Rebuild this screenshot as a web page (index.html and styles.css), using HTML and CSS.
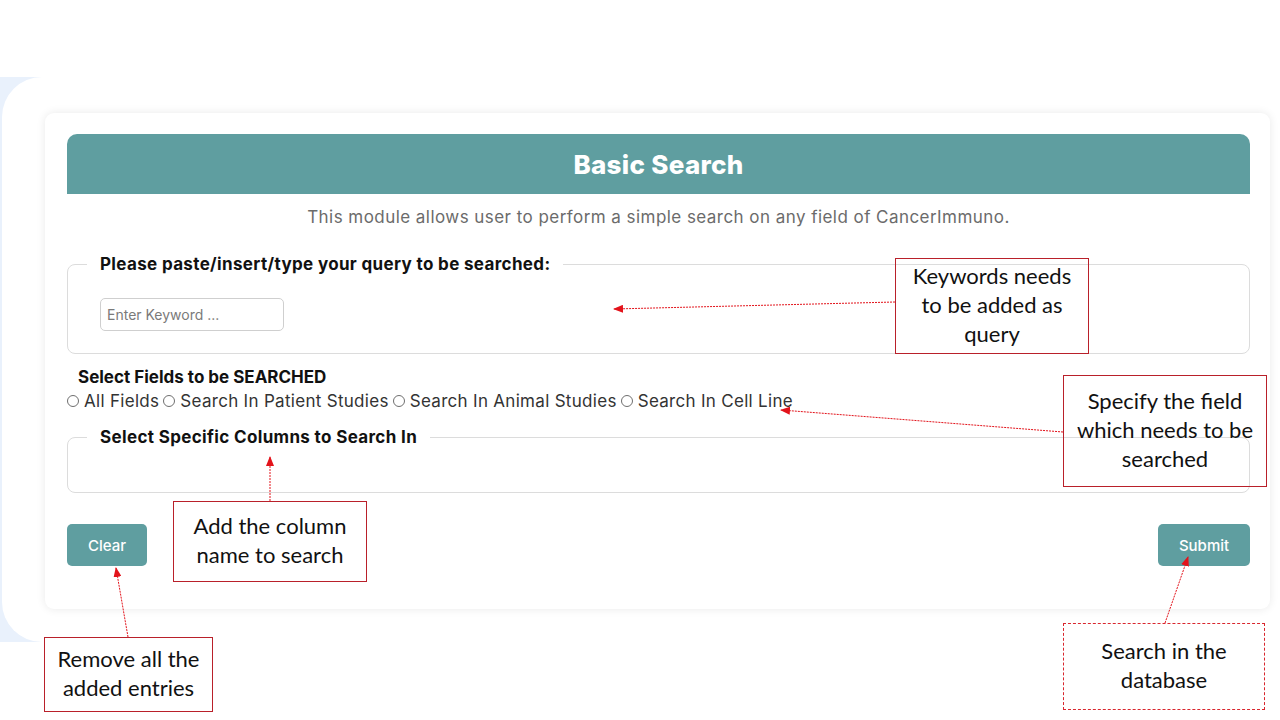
FILE: index.html
```html
<!DOCTYPE html>
<html lang="en">
<head>
<meta charset="utf-8">
<title>Basic Search</title>
<link rel="stylesheet" href="styles.css">
</head>
<body>
<div class="slide">
  <div class="shot">
    <div class="panel">
      <div class="card">
        <div class="card-head">Basic Search</div>
        <p class="intro">This module allows user to perform a simple search on any field of CancerImmuno.</p>
        <fieldset class="group group-query">
          <legend>Please paste/insert/type your query to be searched:</legend>
          <input class="keyword" type="text" placeholder="Enter Keyword ...">
        </fieldset>
        <div class="fields-title">Select Fields to be SEARCHED</div>
        <div class="radios">
          <label class="radio"><input type="radio" name="f">All Fields</label>
          <label class="radio"><input type="radio" name="f">Search In Patient Studies</label>
          <label class="radio"><input type="radio" name="f">Search In Animal Studies</label>
          <label class="radio"><input type="radio" name="f">Search In Cell Line</label>
        </div>
        <fieldset class="group group-cols">
          <legend>Select Specific Columns to Search In</legend>
        </fieldset>
        <div class="actions">
          <button class="btn btn-clear">Clear</button>
          <button class="btn btn-submit">Submit</button>
        </div>
      </div>
    </div>
  </div>

  <div class="note note-keywords">Keywords needs<br>to be added as<br>query</div>
  <div class="note note-field">Specify the field<br>which needs to be<br>searched</div>
  <div class="note note-column">Add the column<br>name to search</div>
  <div class="note note-remove">Remove all the<br>added entries</div>
  <div class="note note-db">Search in the<br>database</div>

  <svg class="arrows" width="1280" height="720" viewBox="0 0 1280 720">
    <defs>
      <marker id="head" markerWidth="10" markerHeight="8" refX="9" refY="4" orient="auto" markerUnits="userSpaceOnUse">
        <path d="M0 0 L10 4 L0 8 Z" fill="#e3131b"/>
      </marker>
    </defs>
    <g stroke="#e3131b" stroke-width="1" stroke-dasharray="2 1" fill="none">
      <line x1="895" y1="302" x2="614" y2="309" marker-end="url(#head)"/>
      <line x1="1063" y1="432" x2="781" y2="410" marker-end="url(#head)"/>
      <line x1="270" y1="501" x2="270" y2="457" marker-end="url(#head)"/>
      <line x1="128" y1="637" x2="116" y2="568" marker-end="url(#head)"/>
      <line x1="1165" y1="623" x2="1188" y2="557" marker-end="url(#head)"/>
    </g>
  </svg>
</div>
</body>
</html>
```

FILE: styles.css
```css
* { box-sizing: border-box; }
html, body { margin: 0; padding: 0; background: #ffffff; }
body { font-family: "Inter", "Open Sans", sans-serif; }

.slide {
  position: relative;
  width: 1280px;
  height: 720px;
  overflow: hidden;
  background: #ffffff;
}

.shot {
  margin-top: 77px;
  height: 565px;
  background: #e9f1fc;
  padding-left: 2px;
}

.panel {
  height: 100%;
  background: #ffffff;
  border-radius: 40px 0 0 40px;
  padding: 36px 10px 0 43px;
}

.card {
  width: 1225px;
  height: 496px;
  background: #ffffff;
  border-radius: 9px;
  box-shadow: 0 0 10px rgba(0, 0, 0, 0.09);
  padding: 21px 20px 0 22px;
}

.card-head {
  height: 60px;
  background: #5f9ea0;
  border-radius: 10px 10px 0 0;
  color: #ffffff;
  font-size: 26px;
  font-weight: 800;
  display: flex;
  align-items: center;
  justify-content: center;
  letter-spacing: 0.3px;
}

.intro {
  margin: 11px 0 0;
  text-align: center;
  font-size: 17px;
  line-height: 24px;
  letter-spacing: 0.45px;
  color: #6b6b6b;
}

.group {
  margin: 0;
  border: 1px solid #dcdcdc;
  border-radius: 8px;
  min-width: 0;
}

.group legend {
  margin-left: -13px;
  padding: 0 13px;
  font-size: 17px;
  line-height: 24px;
  font-weight: 700;
  letter-spacing: 0.35px;
  color: #111111;
}

.group-query {
  margin-top: 23px;
  padding: 22px 32px 22px 32px;
}

.keyword {
  display: block;
  width: 184px;
  height: 33px;
  margin: 0;
  border: 1px solid #cfcfcf;
  border-radius: 5px;
  padding: 0 6px;
  font-family: inherit;
  font-size: 14px;
  color: #333;
  outline: none;
}
.keyword::placeholder { color: #7a7a7a; }

.fields-title {
  margin: 11px 0 0 11px;
  font-size: 17px;
  line-height: 24px;
  font-weight: 700;
  color: #111111;
}

.radios {
  display: flex;
  gap: 4px;
  font-size: 17px;
  line-height: 24px;
  letter-spacing: 0.3px;
  color: #333333;
}

.radio {
  display: flex;
  align-items: center;
}

.radio input {
  appearance: none;
  -webkit-appearance: none;
  width: 12px;
  height: 12px;
  margin: 0 5px 0 0;
  border: 1px solid #6f6f6f;
  border-radius: 50%;
  background: #fff;
}

.group-cols {
  margin-top: 12px;
  padding: 0 32px 43px 32px;
}

.actions {
  margin-top: 31px;
  display: flex;
  justify-content: space-between;
}

.btn {
  height: 42px;
  border: none;
  border-radius: 5px;
  background: #5f9ea0;
  color: #ffffff;
  font-family: inherit;
  font-size: 15px;
  font-weight: 500;
  padding: 0;
}
.btn-clear { width: 80px; }
.btn-submit { width: 92px; }

/* annotations */
.note {
  position: absolute;
  border: 1px solid #b9202a;
  font-family: "Lato", "Open Sans", sans-serif;
  font-size: 22px;
  line-height: 29px;
  color: #111111;
  text-align: center;
  display: flex;
  align-items: center;
  justify-content: center;
  padding-bottom: 4px;
}
.note-keywords { left: 895px; top: 258px; width: 194px; height: 96px; }
.note-field { left: 1063px; top: 375px; width: 204px; height: 112px; }
.note-column { left: 173px; top: 501px; width: 194px; height: 81px; }
.note-remove { left: 44px; top: 637px; width: 169px; height: 75px; }
.note-db { left: 1063px; top: 623px; width: 202px; height: 87px; border: 1px dashed #d9262e; }

.arrows {
  position: absolute;
  left: 0;
  top: 0;
  pointer-events: none;
}
```
